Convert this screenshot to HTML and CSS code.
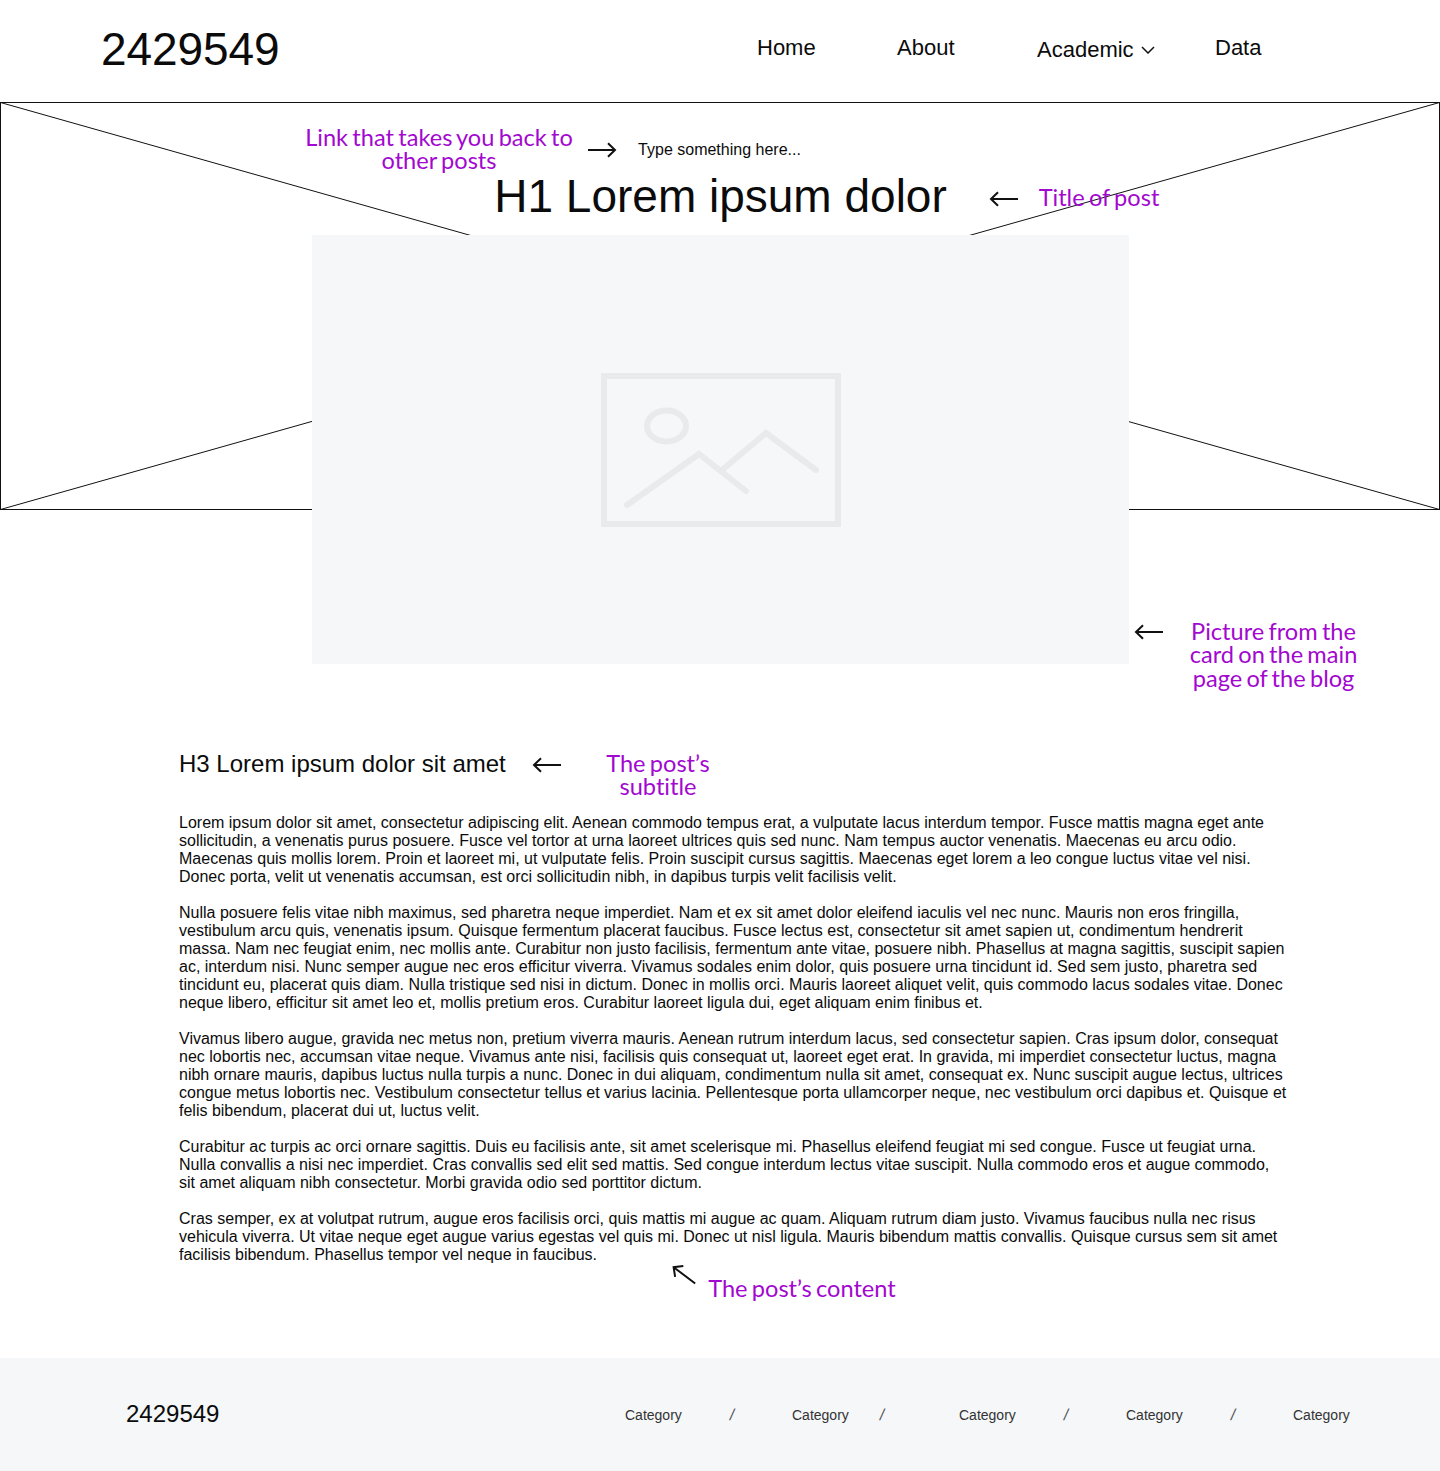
FILE: index.html
```html
<!DOCTYPE html>
<html lang="en">
<head>
<meta charset="utf-8">
<title>Blog post</title>
<link rel="stylesheet" href="styles.css">
</head>
<body>
<svg class="defs" aria-hidden="true">
  <symbol id="arrow" viewBox="0 0 30 16"><path d="M2 8H29M9 1.200L2 8L9 14.800"/></symbol>
</svg>
<div class="page">
  <header class="header">
    <a class="logo">2429549</a>
    <nav class="nav">
      <a>Home</a>
      <a>About</a>
      <a class="dropdown">Academic <svg class="chevron" viewBox="0 0 14 8"><path d="M1 1L7 7L13 1"/></svg></a>
      <a>Data</a>
    </nav>
  </header>

  <section class="hero">
    <svg class="cross" viewBox="0 0 1440 408"><rect x=".5" y=".5" width="1439" height="407"/><path d="M.5 .5L1439.5 407.5M1439.5 .5L.5 407.5"/></svg>
    <p class="back">Type something here...</p>
    <h1>H1 Lorem ipsum dolor</h1>
    <div class="picture">
      <svg class="placeholder" viewBox="0 0 240 154"><rect x="3" y="3" width="234" height="148"/><ellipse cx="65.500" cy="53" rx="19.500" ry="15.500"/><path d="M26 132L98 81L145 118M121 97L165 60L215 97"/></svg>
    </div>
  </section>

  <main class="post">
    <h3>H3 Lorem ipsum dolor sit amet</h3>
    <p>Lorem ipsum dolor sit amet, consectetur adipiscing elit. Aenean commodo tempus erat, a vulputate lacus interdum tempor. Fusce mattis magna eget ante sollicitudin, a venenatis purus posuere. Fusce vel tortor at urna laoreet ultrices quis sed nunc. Nam tempus auctor venenatis. Maecenas eu arcu odio. Maecenas quis mollis lorem. Proin et laoreet mi, ut vulputate felis. Proin suscipit cursus sagittis. Maecenas eget lorem a leo congue luctus vitae vel nisi. Donec porta, velit ut venenatis accumsan, est orci sollicitudin nibh, in dapibus turpis velit facilisis velit.</p>
    <p>Nulla posuere felis vitae nibh maximus, sed pharetra neque imperdiet. Nam et ex sit amet dolor eleifend iaculis vel nec nunc. Mauris non eros fringilla, vestibulum arcu quis, venenatis ipsum. Quisque fermentum placerat faucibus. Fusce lectus est, consectetur sit amet sapien ut, condimentum hendrerit massa. Nam nec feugiat enim, nec mollis ante. Curabitur non justo facilisis, fermentum ante vitae, posuere nibh. Phasellus at magna sagittis, suscipit sapien ac, interdum nisi. Nunc semper augue nec eros efficitur viverra. Vivamus sodales enim dolor, quis posuere urna tincidunt id. Sed sem justo, pharetra sed tincidunt eu, placerat quis diam. Nulla tristique sed nisi in dictum. Donec in mollis orci. Mauris laoreet aliquet velit, quis commodo lacus sodales vitae. Donec neque libero, efficitur sit amet leo et, mollis pretium eros. Curabitur laoreet ligula dui, eget aliquam enim finibus et.</p>
    <p>Vivamus libero augue, gravida nec metus non, pretium viverra mauris. Aenean rutrum interdum lacus, sed consectetur sapien. Cras ipsum dolor, consequat nec lobortis nec, accumsan vitae neque. Vivamus ante nisi, facilisis quis consequat ut, laoreet eget erat. In gravida, mi imperdiet consectetur luctus, magna nibh ornare mauris, dapibus luctus nulla turpis a nunc. Donec in dui aliquam, condimentum nulla sit amet, consequat ex. Nunc suscipit augue lectus, ultrices congue metus lobortis nec. Vestibulum consectetur tellus et varius lacinia. Pellentesque porta ullamcorper neque, nec vestibulum orci dapibus et. Quisque et felis bibendum, placerat dui ut, luctus velit.</p>
    <p>Curabitur ac turpis ac orci ornare sagittis. Duis eu facilisis ante, sit amet scelerisque mi. Phasellus eleifend feugiat mi sed congue. Fusce ut feugiat urna. Nulla convallis a nisi nec imperdiet. Cras convallis sed elit sed mattis. Sed congue interdum lectus vitae suscipit. Nulla commodo eros et augue commodo, sit amet aliquam nibh consectetur. Morbi gravida odio sed porttitor dictum.</p>
    <p>Cras semper, ex at volutpat rutrum, augue eros facilisis orci, quis mattis mi augue ac quam. Aliquam rutrum diam justo. Vivamus faucibus nulla nec risus vehicula viverra. Ut vitae neque eget augue varius egestas vel quis mi. Donec ut nisl ligula. Mauris bibendum mattis convallis. Quisque cursus sem sit amet facilisis bibendum. Phasellus tempor vel neque in faucibus.</p>
  </main>

  <footer class="footer">
    <a class="footer-logo">2429549</a>
    <nav class="categories">
      <a>Category</a><span>/</span><a>Category</a><span class="near">/</span><a>Category</a><span>/</span><a>Category</a><span>/</span><a>Category</a>
    </nav>
  </footer>

  <div class="note note-link">Link that takes you back to<br>other posts</div>
  <div class="note note-title">Title of post</div>
  <div class="note note-picture">Picture from the<br>card on the main<br>page of the blog</div>
  <div class="note note-subtitle">The post’s<br>subtitle</div>
  <div class="note note-content">The post’s content</div>
  <svg class="arrow arrow-link"><use href="#arrow"/></svg>
  <svg class="arrow arrow-title"><use href="#arrow"/></svg>
  <svg class="arrow arrow-picture"><use href="#arrow"/></svg>
  <svg class="arrow arrow-subtitle"><use href="#arrow"/></svg>
  <svg class="arrow arrow-content"><use href="#arrow"/></svg>
</div>
</body>
</html>
```
FILE: styles.css
```css
* { box-sizing: border-box; }
body { margin: 0; background: #fff; color: #0b0b0b; font: 16px/18px "Liberation Sans", Arial, sans-serif; }
h1, h3, p { margin: 0; font-weight: 400; }
svg { fill: none; stroke: #111; }
.defs { position: absolute; width: 0; height: 0; }
.page { position: relative; width: 1440px; height: 1471px; display: flex; flex-direction: column; overflow: hidden; }

.header { height: 102px; flex: none; display: flex; justify-content: space-between; padding: 22px 179px 0 101px; }
.logo { font-size: 46px; line-height: 54px; letter-spacing: -.1px; }
.nav { display: grid; grid-template-columns: 140px 140px 178px 46px; padding-top: 13px; font-size: 22px; line-height: 26px; }
.dropdown { display: flex; align-items: center; gap: 7px; height: 26px; margin-top: 2px; }
.chevron { width: 14px; height: 8px; stroke-width: 1.5; }

.hero { position: relative; flex: none; height: 408px; display: flex; flex-direction: column; align-items: center; padding-top: 38px; }
.cross { position: absolute; inset: 0; width: 1440px; height: 408px; }
.back { position: relative; line-height: 20px; margin-right: 1px; }
h1 { position: relative; font-size: 46px; line-height: 54px; margin: 9px 0 12px 1px; }
.picture { position: relative; flex: none; width: 817px; height: 429px; background: #f5f7f9; display: flex; align-items: center; justify-content: center; }
.placeholder { width: 240px; height: 154px; margin-left: 2px; stroke: #e8eaeb; stroke-width: 6; stroke-linecap: round; }

.post { width: 1110px; margin-left: 179px; padding-top: 240px; flex: 1; }
h3 { font-size: 24px; line-height: 28px; margin-bottom: 36px; }
.post p + p { margin-top: 18px; }

.footer { height: 113px; flex: none; display: flex; align-items: center; justify-content: space-between; background: #f5f7f9; padding: 0 91px 2px 126px; }
.footer-logo { font-size: 24px; }
.categories { display: flex; width: 724px; font-size: 14px; color: #333; padding-top: 2px; }
.categories a { width: 56px; flex: none; }
.categories span { width: 111px; flex: none; padding-left: 49px; font-size: 16px; line-height: 18px; color: #555; transform: skewX(-10deg); }
.categories .near { padding-left: 32px; }

.note { position: absolute; transform: translateX(-50%); white-space: nowrap; text-align: center; color: #a208cf; font: 23.6px/23.3px Lato, sans-serif; word-spacing: -1.8px; font-variant-ligatures: none; }
.note-link { left: 439px; top: 126px; }
.note-title { left: 1099px; top: 186px; }
.note-picture { left: 1273.500px; top: 620px; }
.note-subtitle { left: 658px; top: 752px; }
.note-content { left: 802px; top: 1277px; }
.arrow { position: absolute; width: 30px; height: 16px; stroke-width: 2; }
.arrow-link { left: 587px; top: 142px; transform: scaleX(-1); }
.arrow-title { left: 989px; top: 191px; }
.arrow-picture { left: 1134px; top: 624px; }
.arrow-subtitle { left: 532px; top: 757px; }
.arrow-content { left: 669px; top: 1267px; transform: rotate(37deg); }
```
